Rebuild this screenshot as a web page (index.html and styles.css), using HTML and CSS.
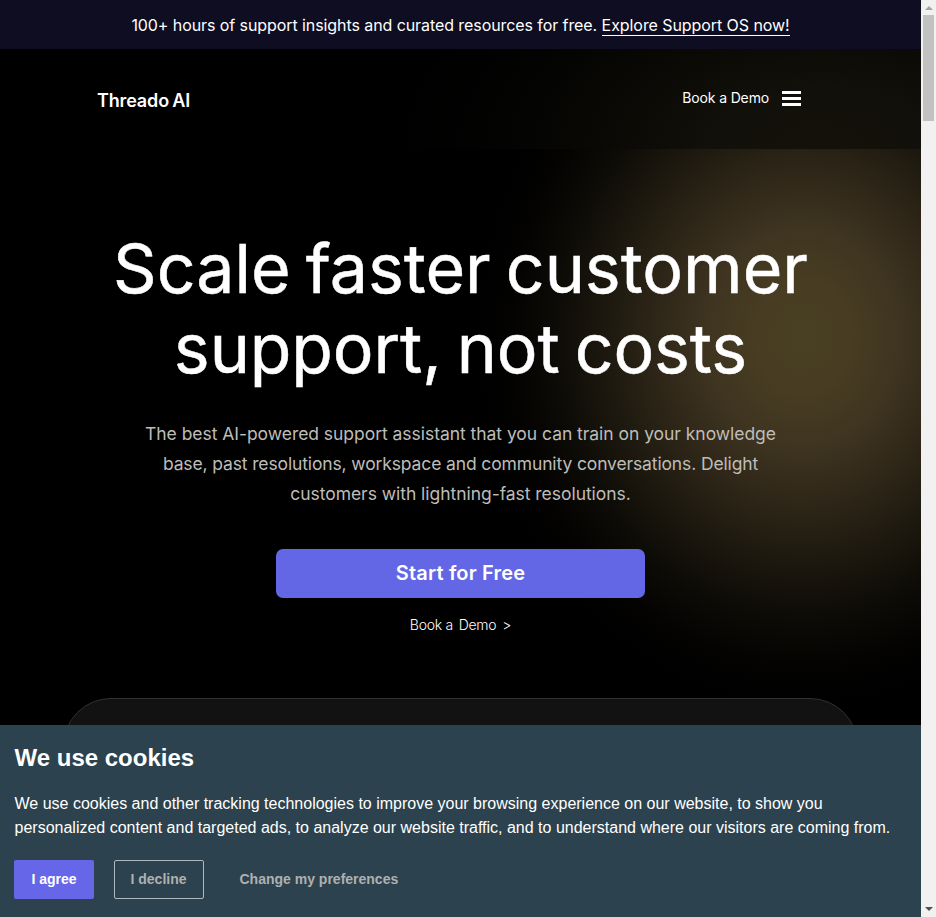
FILE: index.html
```html
<!DOCTYPE html>
<html lang="en">
<head>
<meta charset="utf-8">
<title>Threado AI</title>
<link rel="stylesheet" href="styles.css">
</head>
<body>
<div class="window">
  <div class="page">
    <div class="announcement">
      <p><span class="announcement-text">100+ hours of support insights and curated resources for free.</span> <a class="announcement-link" href="#">Explore Support OS now!</a></p>
    </div>
    <div class="stage">
      <header class="navbar">
        <a class="brand" href="#">Threado AI</a>
        <nav class="nav-actions">
          <a class="nav-demo" href="#">Book a Demo</a>
          <svg class="menu-icon" viewBox="0 0 19 15" aria-label="Menu"><path d="M1 1.5h17M1 7.5h17M1 13.5h17" stroke="#fff" stroke-width="2.8" stroke-linecap="square"/></svg>
        </nav>
      </header>
      <main class="hero">
        <h1><span class="title-a">Scale faster customer</span><br><span class="title-b">support, not costs</span></h1>
        <p class="lead"><span class="lead-a">The best AI-powered support assistant that you can train on your knowledge</span><br><span class="lead-b">base, past resolutions, workspace and community conversations. Delight</span><br><span class="lead-c">customers with lightning-fast resolutions.</span></p>
        <a class="cta" href="#">Start for Free</a>
        <a class="demo-link" href="#"><span>Book a</span><span>Demo</span><span>&gt;</span></a>
        <div class="showcase"></div>
      </main>
    </div>
    <section class="cookies">
      <h2>We use cookies</h2>
      <p>We use cookies and other tracking technologies to improve your browsing experience on our website, to show you personalized content and targeted ads, to analyze our website traffic, and to understand where our visitors are coming from.</p>
      <div class="cookie-actions">
        <button class="agree">I agree</button>
        <button class="decline">I decline</button>
        <button class="preferences">Change my preferences</button>
      </div>
    </section>
  </div>
  <div class="scrollbar">
    <svg viewBox="0 0 15 15"><path d="M4 10h8L8 6z" fill="#a3a3a3"/></svg>
    <div class="thumb"></div>
    <svg viewBox="0 0 15 15"><path d="M4 5h8L8 9z" fill="#505050"/></svg>
  </div>
</div>
</body>
</html>
```
FILE: styles.css
```css
* { box-sizing: border-box; }
body { margin: 0; background: #000; color: #fff; font-family: Inter, sans-serif; }
a { color: inherit; text-decoration: none; }
h1, h2, p { margin: 0; }
.window { display: flex; width: 936px; height: 917px; overflow: hidden; }
.page { display: flex; flex-direction: column; width: 921px; height: 917px; overflow: hidden; }

.announcement { height: 49px; flex: none; padding-top: 14px; background: #0e0d21; text-align: center; font-size: 16px; line-height: 22px; white-space: nowrap; }
.announcement-text { letter-spacing: -.08px; }
.announcement-link { display: inline-block; letter-spacing: -.07px; border-bottom: 1px solid #fff; height: 22px; line-height: 22px; }

.stage { height: 676px; flex: none; overflow: hidden; background: radial-gradient(ellipse 325px 368px at 803px 288px, #493f22 0%, #483d22 15%, #3e3420 30%, #32291a 42%, #211c11 57%, #0e0c07 75%, #040302 89%, #000 100%); }
.navbar { display: flex; justify-content: space-between; height: 100px; padding: 0 120px 0 97px; background: radial-gradient(ellipse 420px 240px at 820px 100px, #15110a 0%, #12100a 25%, #0a0905 50%, #030302 75%, #000 100%); }
.brand { padding-top: 39px; font-size: 18px; line-height: 26px; font-weight: 600; letter-spacing: -.15px; word-spacing: -1px; }
.nav-actions { display: flex; gap: 13px; height: 20px; margin-top: 39px; align-items: center; }
.nav-demo { font-size: 14px; line-height: 20px; letter-spacing: -.15px; }
.menu-icon { width: 19px; height: 15px; }

.hero { display: flex; flex-direction: column; align-items: center; text-align: center; white-space: nowrap; }
h1 { margin-top: 79px; font-size: 68px; line-height: 80px; font-weight: 400; -webkit-text-stroke: .5px #fff; word-spacing: -4px; }
.title-a { letter-spacing: 0; }
.title-b { letter-spacing: -.1px; }
.lead { margin-top: 31px; color: #bebdb9; font-size: 17.5px; line-height: 30px; }
.lead-a, .lead-c { letter-spacing: -.04px; }
.lead-b { letter-spacing: -.13px; }
.cta { width: 369px; height: 49px; margin-top: 40px; border-radius: 7px; background: #6366e5; font-size: 20px; line-height: 48px; font-weight: 600; letter-spacing: .17px; }
.demo-link { display: flex; gap: 6px; margin-top: 16px; font-size: 14px; line-height: 22px; font-weight: 300; letter-spacing: -.3px; }
.showcase { width: 795px; height: 200px; margin-top: 62px; border: 1px solid #303030; border-radius: 48px; background: #121212; }

.cookies { height: 192px; flex: none; padding: 18px 14px 0; background: #2c424e; font-family: "Liberation Sans", Arial, sans-serif; }
.cookies h2 { margin-left: .5px; font-size: 24px; line-height: 30px; font-weight: 700; }
.cookies p { margin: 19px 0 0 .5px; font-size: 16px; line-height: 24px; }
.cookie-actions { display: flex; margin-top: 20px; }
.cookie-actions button { height: 39px; border: 0; padding: 0; border-radius: 2px; background: none; color: #b0b0b0; font: 700 14px/39px "Liberation Sans", Arial, sans-serif; }
.cookie-actions .agree { width: 80px; background: #6666e8; color: #fff; }
.cookie-actions .decline { width: 90px; margin-left: 20px; padding-right: 1px; border: 1px solid #b0b8bd; line-height: 37px; }
.cookie-actions .preferences { margin-left: 35.5px; }

.scrollbar { display: flex; flex-direction: column; width: 15px; height: 917px; background: #f1f1f1; }
.scrollbar svg { display: block; width: 15px; height: 15px; }
.scrollbar svg:last-child { margin-top: auto; }
.thumb { width: 11px; height: 106px; margin-left: 2px; background: #c1c1c1; }
```
